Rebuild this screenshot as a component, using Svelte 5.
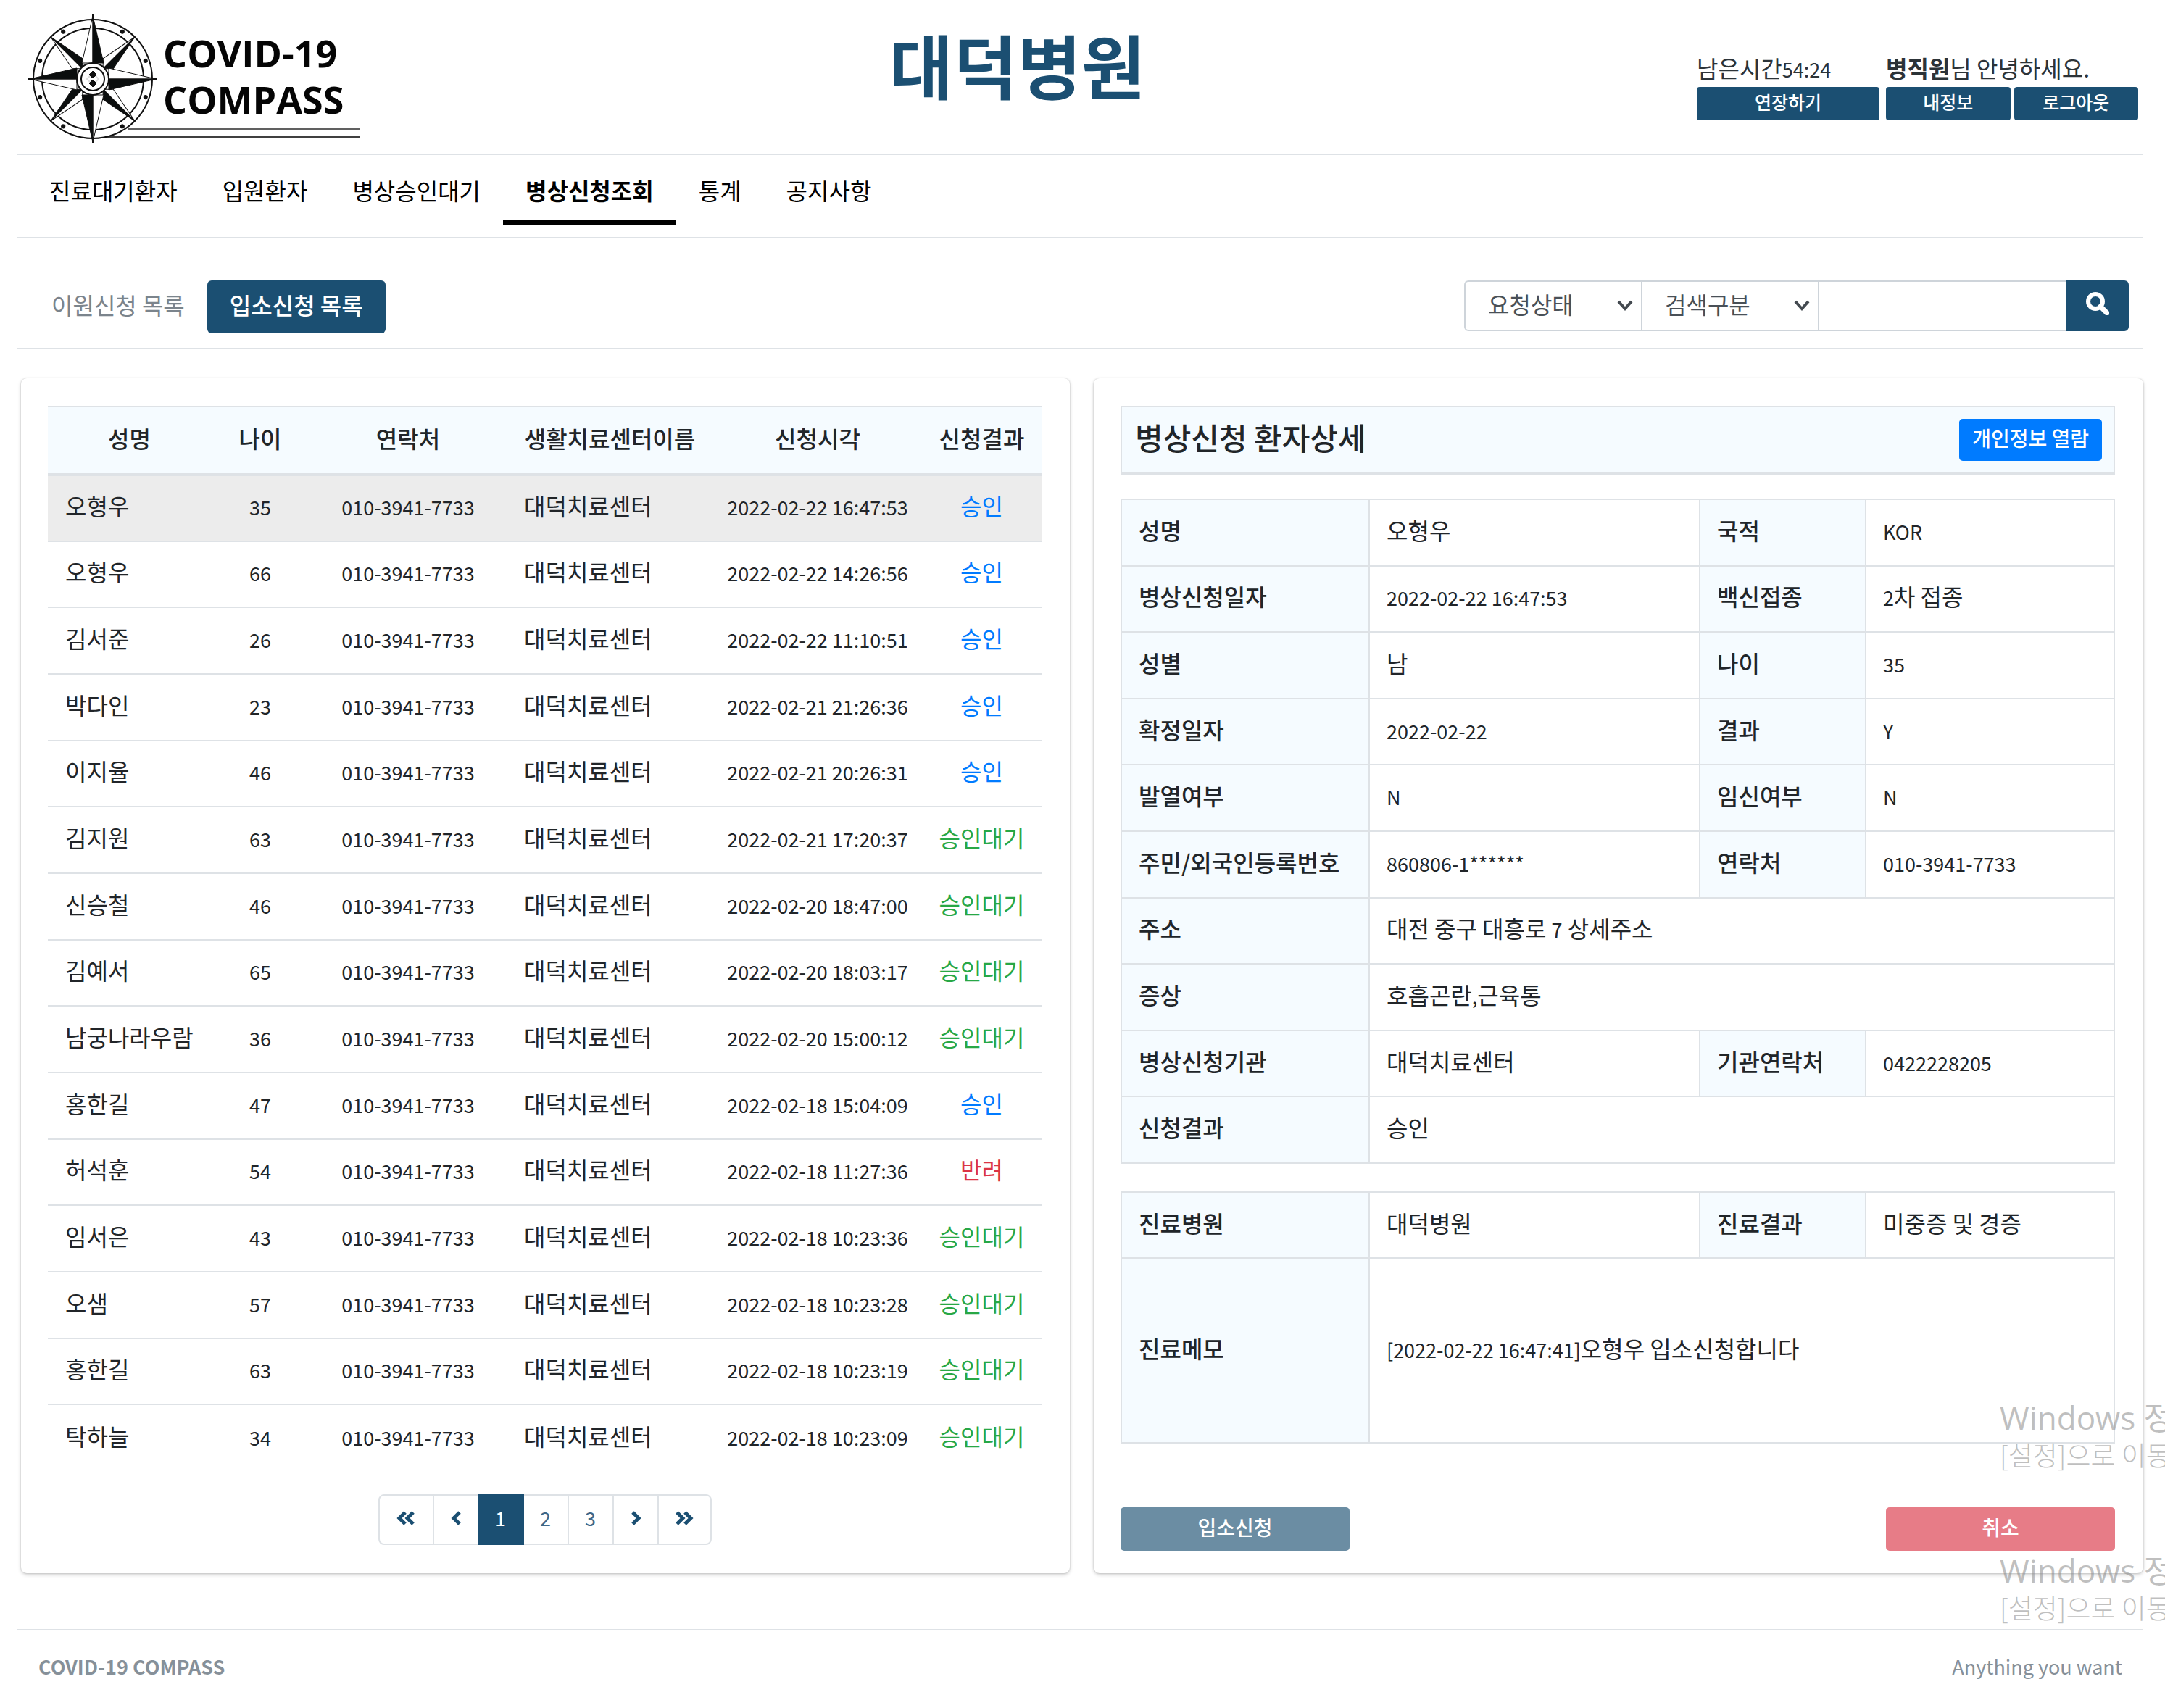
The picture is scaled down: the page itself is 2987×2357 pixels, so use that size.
<script lang="ts">
  type Run = { text: string; latin: boolean };

  const navItems = ['진료대기환자', '입원환자', '병상승인대기', '병상신청조회', '통계', '공지사항'];
  const activeNav = '병상신청조회';

  const phone = '010-3941-7733';
  const center = '대덕치료센터';
  const applicants = [
    ['오형우', '35', '2022-02-22 16:47:53', '승인'],
    ['오형우', '66', '2022-02-22 14:26:56', '승인'],
    ['김서준', '26', '2022-02-22 11:10:51', '승인'],
    ['박다인', '23', '2022-02-21 21:26:36', '승인'],
    ['이지율', '46', '2022-02-21 20:26:31', '승인'],
    ['김지원', '63', '2022-02-21 17:20:37', '승인대기'],
    ['신승철', '46', '2022-02-20 18:47:00', '승인대기'],
    ['김예서', '65', '2022-02-20 18:03:17', '승인대기'],
    ['남궁나라우람', '36', '2022-02-20 15:00:12', '승인대기'],
    ['홍한길', '47', '2022-02-18 15:04:09', '승인'],
    ['허석훈', '54', '2022-02-18 11:27:36', '반려'],
    ['임서은', '43', '2022-02-18 10:23:36', '승인대기'],
    ['오샘', '57', '2022-02-18 10:23:28', '승인대기'],
    ['홍한길', '63', '2022-02-18 10:23:19', '승인대기'],
    ['탁하늘', '34', '2022-02-18 10:23:09', '승인대기']
  ];
  const statusClass: Record<string, string> = { 승인: 'approved', 승인대기: 'waiting', 반려: 'rejected' };

  const details = [
    ['성명', '오형우', '국적', 'KOR'],
    ['병상신청일자', '2022-02-22 16:47:53', '백신접종', '2차 접종'],
    ['성별', '남', '나이', '35'],
    ['확정일자', '2022-02-22', '결과', 'Y'],
    ['발열여부', 'N', '임신여부', 'N'],
    ['주민/외국인등록번호', '860806-1******', '연락처', '010-3941-7733'],
    ['주소', '대전 중구 대흥로 7 상세주소'],
    ['증상', '호흡곤란,근육통'],
    ['병상신청기관', '대덕치료센터', '기관연락처', '0422228205'],
    ['신청결과', '승인']
  ];

  const treatment = [
    ['진료병원', '대덕병원', '진료결과', '미중증 및 경증'],
    ['진료메모', '[2022-02-22 16:47:41]오형우 입소신청합니다']
  ];

  let selected = $state(0);
  let page = $state(1);

  // Latin letters and digits are set smaller than Hangul.
  function runs(text: string): Run[] {
    return text
      .split(/([!-~]+(?: [!-~]+)*)/)
      .filter((t) => t !== '')
      .map((t) => ({ text: t, latin: /[!-~]/.test(t) }));
  }
</script>

{#snippet mixed(text: string)}{#each runs(text) as run}{#if run.latin}<span class="latin">{run.text}</span>{:else}{run.text}{/if}{/each}{/snippet}

{#snippet chevron()}
  <svg class="chevron" viewBox="0 0 24 18" aria-hidden="true"><path d="M3 3l9 10 9-10" fill="none" stroke="#444a50" stroke-width="4" /></svg>
{/snippet}

{#snippet detailTable(rows: string[][], label: string)}
  <table class="detail" aria-label={label}>
    <colgroup><col class="d1" /><col class="d2" /><col class="d3" /><col class="d4" /></colgroup>
    <tbody>
      {#each rows as r}
        <tr class:memo={r[0] === '진료메모'}>
          <th scope="row">{r[0]}</th>
          <td colspan={r.length === 2 ? 3 : 1}>{@render mixed(r[1])}</td>
          {#if r.length > 2}
            <th scope="row">{r[2]}</th>
            <td>{@render mixed(r[3])}</td>
          {/if}
        </tr>
      {/each}
    </tbody>
  </table>
{/snippet}

<div class="page">
  <header>
    <a class="logo" href="#home" aria-label="COVID-19 COMPASS">
      <svg viewBox="0 0 476 184" role="img" aria-hidden="true">
        <g transform="translate(92 93)" stroke="#111" stroke-width="2" fill="none">
          <path d="M48 69H369" stroke="#606060" stroke-width="4" />
          <path d="M14 80H369" stroke="#404040" stroke-width="4" />
          <circle r="82" fill="#fff" />
          <circle r="70" />
          {#each [45, 135, 225, 315] as a}
            <g transform="rotate({a})">
              <path d="M0-82L-10-30L0-20Z" fill="#fff" stroke-width="1" />
              <path d="M0-82L10-30L0-20Z" fill="#0b0e0e" stroke-width="1" />
            </g>
          {/each}
          {#each [0, 90, 180, 270] as a}
            <g transform="rotate({a})">
              <path d="M0-87L-15-22H0Z" fill="#fff" stroke-width="1" />
              <path d="M0-87L15-22H0Z" fill="#0b0e0e" stroke-width="1" />
              <path d="M0-89V-80" />
            </g>
          {/each}
          {#each [32, 71, 109, 148, 212, 251, 289, 328] as a}
            <circle cy="-77" r="3" transform="rotate({a})" fill="#111" stroke="none" />
          {/each}
          <circle r="22" fill="#fff" />
          <circle r="16" />
          <path d="M-8 0L0-8L8 0L0 8Z" stroke="#ddd" />
          <path d="M0-11L5-6L0-1L-5-6ZM0 1L5 6L0 11L-5 6Z" fill="#111" stroke-width="1" />
        </g>
        <text x="189" y="77">COVID-19</text>
        <text x="189" y="141">COMPASS</text>
      </svg>
    </a>
    <h1>대덕병원</h1>
    <div class="session">
      <div class="block timer">
        <span>{@render mixed('남은시간54:24')}</span>
        <div class="actions"><button>연장하기</button></div>
      </div>
      <div class="block user">
        <span><strong>병직원</strong>님 안녕하세요.</span>
        <div class="actions"><button>내정보</button><button>로그아웃</button></div>
      </div>
    </div>
  </header>

  <nav aria-label="주 메뉴">
    {#each navItems as item}
      <a href="#menu" class:active={item === activeNav}>{item}</a>
    {/each}
  </nav>

  <div class="toolbar">
    <div class="tabs">
      <button>이원신청 목록</button>
      <button class="on">입소신청 목록</button>
    </div>
    <form class="search" onsubmit={(e) => e.preventDefault()}>
      <div class="pick">
        <select aria-label="요청상태"><option>요청상태</option></select>
        {@render chevron()}
      </div>
      <div class="pick">
        <select aria-label="검색구분"><option>검색구분</option></select>
        {@render chevron()}
      </div>
      <input type="text" aria-label="검색어" />
      <button aria-label="검색">
        <svg viewBox="0 0 32 32" aria-hidden="true">
          <circle cx="13" cy="13" r="10" fill="none" stroke="#fff" stroke-width="6" />
          <path d="M20 20l9 9" stroke="#fff" stroke-width="7" stroke-linecap="round" />
        </svg>
      </button>
    </form>
  </div>

  <main>
    <section class="card">
      <table class="list">
        <colgroup><col class="c1" /><col class="c2" /><col class="c3" /><col class="c4" /><col class="c5" /><col class="c6" /></colgroup>
        <thead>
          <tr>
            <th scope="col">성명</th>
            <th scope="col">나이</th>
            <th scope="col">연락처</th>
            <th scope="col">생활치료센터이름</th>
            <th scope="col">신청시각</th>
            <th scope="col">신청결과</th>
          </tr>
        </thead>
        <tbody>
          {#each applicants as [name, age, time, status], i}
            <tr class:selected={selected === i} onclick={() => (selected = i)}>
              <td class="left">{name}</td>
              <td>{@render mixed(age)}</td>
              <td>{@render mixed(phone)}</td>
              <td class="left">{center}</td>
              <td>{@render mixed(time)}</td>
              <td class={statusClass[status]}>{status}</td>
            </tr>
          {/each}
        </tbody>
      </table>
      <div class="pager">
        <button class="wide" aria-label="처음"><svg viewBox="0 0 26 20" aria-hidden="true"><path d="M12 2L4 10l8 8M23 2l-8 8 8 8" /></svg></button>
        <button aria-label="이전"><svg viewBox="0 0 26 20" aria-hidden="true"><path d="M18 2l-8 8 8 8" /></svg></button>
        {#each [1, 2, 3] as n}
          <button class:current={page === n} onclick={() => (page = n)}>{n}</button>
        {/each}
        <button aria-label="다음"><svg viewBox="0 0 26 20" aria-hidden="true"><path d="M9 2l8 8-8 8" /></svg></button>
        <button class="wide" aria-label="마지막"><svg viewBox="0 0 26 20" aria-hidden="true"><path d="M3 2l8 8-8 8M14 2l8 8-8 8" /></svg></button>
      </div>
    </section>

    <section class="card">
      <div class="panel-head">
        <h2>병상신청 환자상세</h2>
        <button>개인정보 열람</button>
      </div>
      {@render detailTable(details, '병상신청 환자상세')}
      {@render detailTable(treatment, '진료 내역')}
      <div class="decide">
        <button class="apply" disabled>입소신청</button>
        <button class="cancel" disabled>취소</button>
      </div>
    </section>
  </main>

  <footer>
    <strong>COVID-19 COMPASS</strong>
    <span>Anything you want</span>
  </footer>

  <div class="activation upper"><p>Windows 정</p><p class="sub">[설정]으로 이동</p></div>
  <div class="activation lower"><p>Windows 정</p><p class="sub">[설정]으로 이동</p></div>
</div>

<style>
  :global(body) {
    background: #fff;
  }
  .page {
    --navy: #1b4f72;
    --line: #dee2e6;
    --tint: #f5fbff;
    position: relative;
    overflow: hidden;
    min-height: 100vh;
    box-sizing: border-box;
    padding: 0 30px 0 24px;
    color: #212529;
    font-family: 'Noto Sans CJK KR', sans-serif;
    font-size: 32px;
    line-height: 48px;
  }
  .page :global(*) {
    box-sizing: border-box;
  }
  button,
  input,
  select {
    font: inherit;
    color: inherit;
    margin: 0;
    padding: 0;
    border: 0;
    background: none;
  }
  a {
    color: #000;
    text-decoration: none;
  }
  .latin {
    font-size: 27px;
    line-height: 1;
  }

  header {
    display: grid;
    grid-template-columns: auto 1fr auto;
    align-items: start;
    padding: 0 7px 12px 12px;
    border-bottom: 2px solid var(--line);
  }
  .logo {
    display: block;
    width: 476px;
    padding-top: 16px;
  }
  .logo svg {
    display: block;
    width: 476px;
    height: 184px;
  }
  .logo text {
    font: 700 52px 'Open Sans', sans-serif;
    fill: #050505;
  }
  h1 {
    margin: 0;
    padding: 22px 46px 0 0;
    text-align: center;
    color: var(--navy);
    font-size: 96px;
    line-height: 132px;
    font-weight: 700;
  }
  .session {
    display: flex;
    gap: 9px;
    padding-top: 66px;
  }
  .block > span {
    display: block;
    height: 54px;
    color: #2c3338;
  }
  .block > span {
    line-height: 54px;
  }
  .timer {
    width: 252px;
  }
  .user {
    width: 348px;
  }
  .actions {
    display: flex;
    gap: 5px;
  }
  .actions button {
    flex: 1;
    height: 46px;
    padding-bottom: 6px;
    border-radius: 4px;
    background: var(--navy);
    color: #fff;
    font-size: 25px;
    line-height: 40px;
    font-weight: 500;
  }

  nav {
    display: flex;
    padding: 10px 13px 16px;
    border-bottom: 2px solid var(--line);
  }
  nav a {
    padding: 14px 31px 18px;
    border-bottom: 7px solid transparent;
  }
  nav a.active {
    border-color: #000;
    font-weight: 700;
  }

  .toolbar {
    display: flex;
    justify-content: space-between;
    align-items: flex-start;
    padding: 58px 20px 20px 16px;
    border-bottom: 2px solid var(--line);
  }
  .tabs {
    display: flex;
  }
  .tabs button {
    height: 73px;
    padding: 0 31px 8px;
    border-radius: 6px;
    color: #7b848c;
  }
  .tabs .on {
    background: var(--navy);
    color: #fff;
    font-weight: 500;
  }
  .search {
    display: flex;
    height: 70px;
  }
  .pick {
    display: grid;
    width: 244px;
    align-items: center;
    border: 2px solid #ced4da;
    border-right: 0;
  }
  .pick:first-child {
    border-radius: 6px 0 0 6px;
  }
  .pick select {
    grid-area: 1 / 1;
    width: 100%;
    height: 66px;
    padding: 0 31px 6px;
    appearance: none;
    color: #495057;
  }
  .chevron {
    grid-area: 1 / 1;
    justify-self: end;
    width: 24px;
    height: 18px;
    margin-right: 10px;
    pointer-events: none;
  }
  .search input {
    width: 342px;
    padding: 0 24px;
    border: 2px solid #ced4da;
    border-right: 0;
  }
  .search button {
    width: 87px;
    display: grid;
    place-items: center;
    padding-bottom: 6px;
    border-radius: 0 6px 6px 0;
    background: var(--navy);
  }
  .search button svg {
    width: 32px;
    height: 32px;
  }

  main {
    display: grid;
    grid-template-columns: 1fr 1fr;
    gap: 33px;
    margin: 40px 2px 0 5px;
  }
  .card {
    padding: 38px 39px 31px 37px;
    border-radius: 8px;
    box-shadow: 0 0 2px rgba(0, 0, 0, 0.2), 0 2px 5px rgba(0, 0, 0, 0.2);
  }
  table {
    width: 100%;
    table-layout: fixed;
    border-collapse: collapse;
  }
  th {
    font-weight: 500;
    background: var(--tint);
  }
  th,
  td {
    padding: 0 0 8px;
    white-space: nowrap;
  }
  .list {
    height: 1470px;
    text-align: center;
  }
  .list th {
    height: 94px;
    border-top: 2px solid var(--line);
    border-bottom: 4px solid var(--line);
  }
  .list td {
    height: 91px;
    border-top: 2px solid var(--line);
  }
  .list .left {
    padding-left: 24px;
    text-align: left;
  }
  .list .selected {
    background: #ececec;
  }
  .c1 { width: 225px; }
  .c2 { width: 136px; }
  .c3 { width: 272px; }
  .c4 { width: 285px; }
  .c5 { width: 288px; }
  .c6 { width: 165px; }
  .approved {
    color: #007bff;
  }
  .waiting {
    color: #28a745;
  }
  .rejected {
    color: #dc3545;
  }

  .pager {
    display: flex;
    width: fit-content;
    margin: 32px auto 0;
    border: 2px solid var(--line);
    border-radius: 8px;
  }
  .pager button {
    width: 62px;
    height: 66px;
    display: grid;
    place-items: center;
    padding-bottom: 4px;
    border-left: 2px solid var(--line);
    color: #3f6787;
    font-size: 27px;
  }
  .pager button:first-child {
    border-left: 0;
  }
  .pager .wide {
    width: 73px;
  }
  .pager .current {
    margin: -2px -2px -2px 0;
    width: 64px;
    height: 70px;
    z-index: 1;
    border-left: 0;
    background: var(--navy);
    color: #fff;
  }
  .pager svg {
    width: 26px;
    height: 20px;
    fill: none;
    stroke: var(--navy);
    stroke-width: 5;
  }

  .panel-head {
    display: flex;
    justify-content: space-between;
    align-items: center;
    height: 96px;
    padding: 0 16px 0 18px;
    border: 2px solid var(--line);
    border-bottom-width: 4px;
    background: var(--tint);
  }
  h2 {
    margin: 0;
    padding-bottom: 8px;
    font-size: 42px;
    line-height: 60px;
    font-weight: 500;
  }
  .panel-head button {
    height: 58px;
    padding: 0 18px 6px;
    border-radius: 5px;
    background: #007bff;
    color: #fff;
    font-size: 28px;
    line-height: 42px;
    font-weight: 500;
  }
  .detail {
    height: 918px;
    margin-top: 32px;
  }
  .detail + .detail {
    height: 347px;
    margin-top: 38px;
  }
  .detail th,
  .detail td {
    height: 91px;
    padding-left: 23px;
    border: 2px solid var(--line);
    text-align: left;
  }
  .detail .memo th,
  .detail .memo td {
    height: 255px;
  }
  .d1 { width: 342px; }
  .d2 { width: 456px; }
  .d3 { width: 229px; }
  .d4 { width: 343px; }

  .decide {
    display: flex;
    justify-content: space-between;
    margin-top: 88px;
  }
  .decide button {
    width: 316px;
    height: 60px;
    padding-bottom: 6px;
    border-radius: 5px;
    color: #fff;
    font-size: 28px;
    line-height: 42px;
    font-weight: 500;
  }
  .apply {
    background: #6b8da3;
  }
  .cancel {
    background: #e77c87;
  }

  footer {
    display: flex;
    justify-content: space-between;
    margin-top: 77px;
    padding: 26px 29px;
    border-top: 2px solid var(--line);
    color: #869099;
    font-size: 27px;
  }

  .activation {
    position: absolute;
    left: calc(100% - 228px);
    color: #8888;
    white-space: nowrap;
    font-weight: 300;
    pointer-events: none;
  }
  .upper {
    top: 1926px;
  }
  .lower {
    top: 2137px;
  }
  .activation p {
    margin: 0;
    font-family: 'Open Sans', 'Noto Sans CJK KR', sans-serif;
    font-size: 44px;
    line-height: 60px;
    font-weight: 400;
  }
  .activation .sub {
    font-family: 'Noto Sans CJK KR', sans-serif;
    font-size: 37px;
    line-height: 42px;
    font-weight: 300;
  }
</style>
